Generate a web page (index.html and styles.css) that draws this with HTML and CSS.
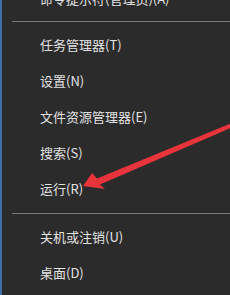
FILE: index.html
```html
<!DOCTYPE html>
<html lang="zh-CN">
<head>
<meta charset="utf-8">
<link rel="stylesheet" href="styles.css">
</head>
<body>
<div class="menu">
  <div class="item first">命令提示符(管理员)(A)</div>
  <div class="sep"></div>
  <div class="item">任务管理器(T)</div>
  <div class="item">设置(N)</div>
  <div class="item">文件资源管理器(E)</div>
  <div class="item">搜索(S)</div>
  <div class="item">运行(R)</div>
  <div class="sep second"></div>
  <div class="item">关机或注销(U)</div>
  <div class="item">桌面(D)</div>
</div>
<svg class="arrow" width="230" height="295" viewBox="0 0 230 295">
  <polygon points="83,186 92,173 97,178.5 232,123 232,127.5 100,184.5 105,189" fill="#e8343a"/>
</svg>
</body>
</html>
```
FILE: styles.css
```css
html, body {
  margin: 0;
  padding: 0;
  width: 230px;
  height: 295px;
  overflow: hidden;
  background: #2b2b2b;
}
.menu {
  height: 295px;
  border-left: 2px solid #3d6fa6;
  box-sizing: border-box;
  overflow: hidden;
  font-family: "Noto Sans CJK SC", "Noto Sans", sans-serif;
  font-size: 13px;
  color: #e2e2e2;
}
.item {
  height: 36px;
  line-height: 36px;
  padding-left: 38px;
  white-space: nowrap;
}
.item.first {
  margin-top: -19px;
}
.sep {
  height: 1px;
  background: #7a7a7a;
  margin: 4px 0 5px 10px;
}
.sep.second {
  margin-top: 6px;
  margin-bottom: 5px;
}
.arrow {
  position: absolute;
  left: 0;
  top: 0;
}
```
